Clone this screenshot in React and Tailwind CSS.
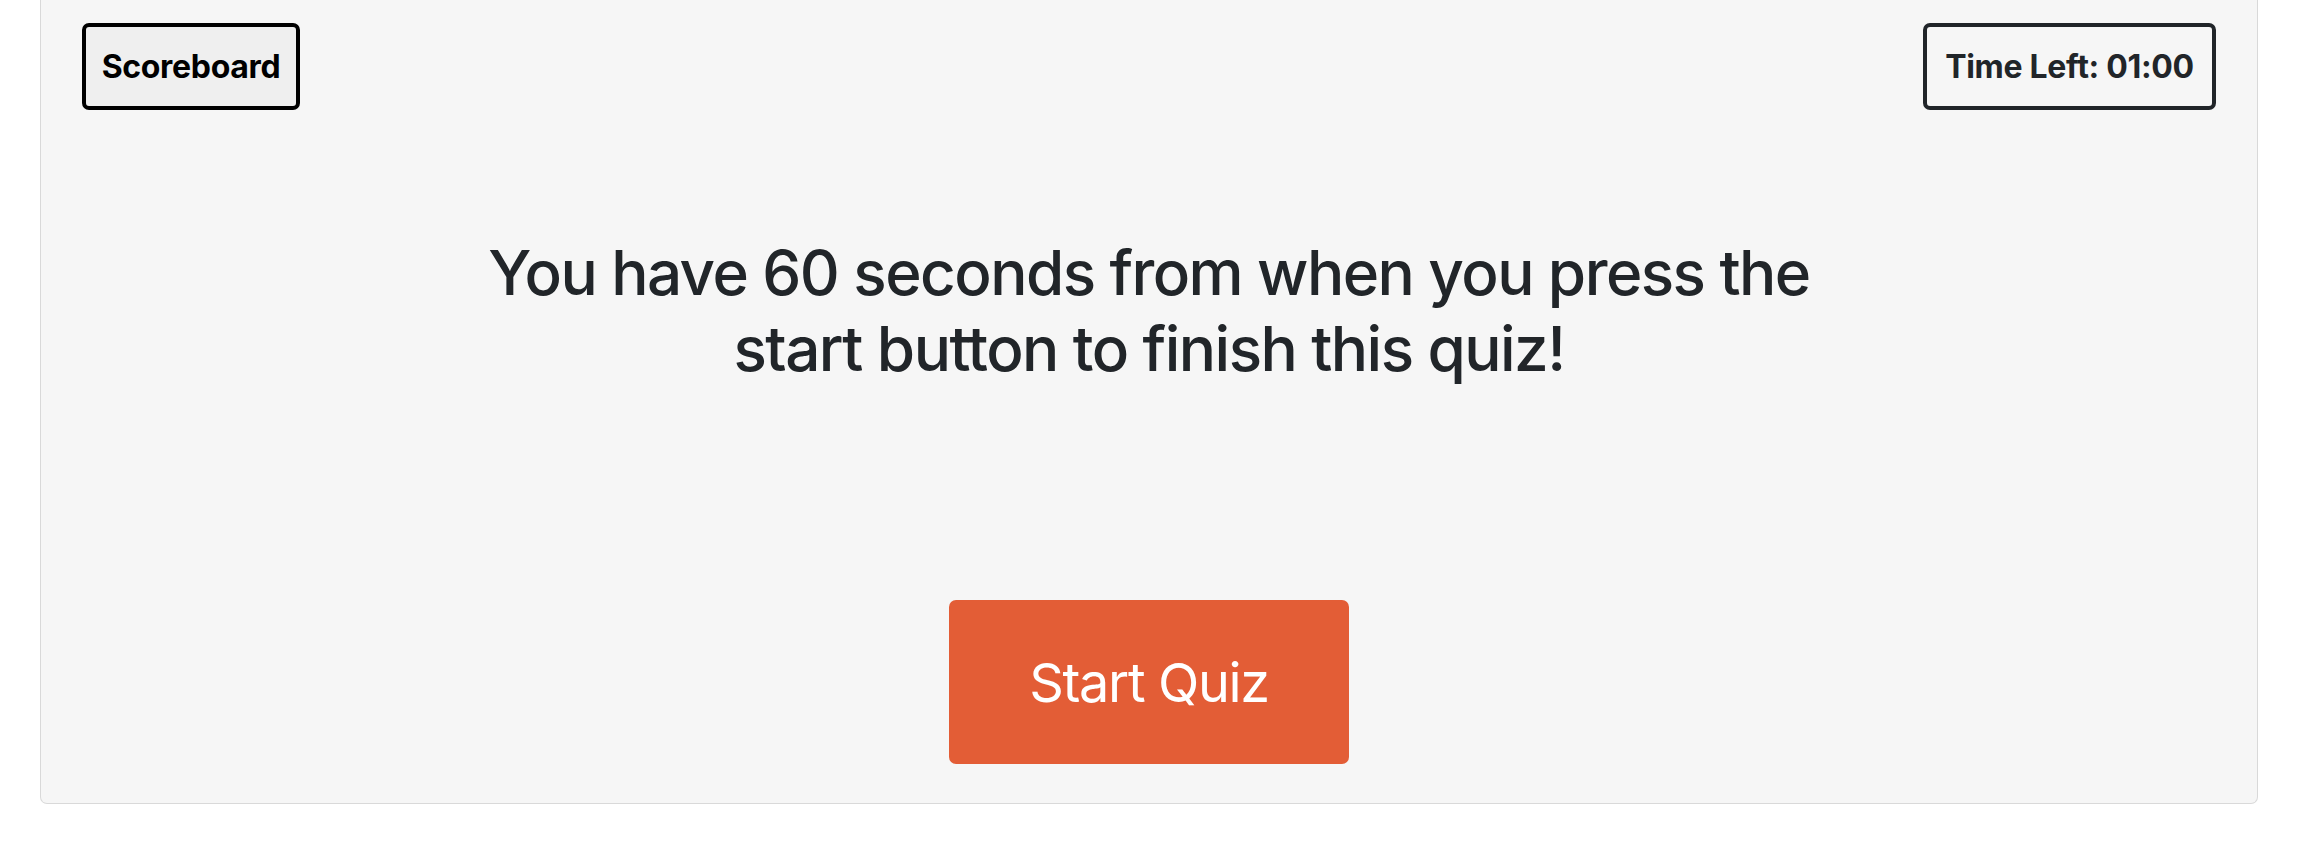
export default function App() {
  return (
    <div className="w-[2303px] h-[844px] bg-white font-['Inter',sans-serif]">
      <div className="ml-[40px] w-[2218px] h-[804px] flex flex-col items-center bg-[#f6f6f6] border-x border-b border-[#d9d9d9] rounded-b-[7px]">
        <div className="w-full flex items-center justify-between px-[41px] pt-[23px]">
          <button className="h-[87px] w-[218px] bg-[#efefef] border-[4px] border-black rounded-[7px] text-black font-bold text-[32px] tracking-[-0.01em]">
            Scoreboard
          </button>
          <div className="h-[87px] w-[293px] flex items-center justify-center border-[4px] border-[#212529] rounded-[7px] text-[#212529] font-bold text-[32px] tracking-[-0.01em]">
            Time Left: 01:00
          </div>
        </div>
        <h2 className="mt-[125px] text-center text-[62px] leading-[76px] font-medium tracking-[-0.025em] text-[#212529]">
          You have 60 seconds from when you press the
          <br />
          start button to finish this quiz!
        </h2>
        <button className="mt-[213px] w-[400px] h-[164px] bg-[#e35d36] rounded-[7px] text-white text-[54px] tracking-[-0.025em]">
          Start Quiz
        </button>
      </div>
    </div>
  )
}
